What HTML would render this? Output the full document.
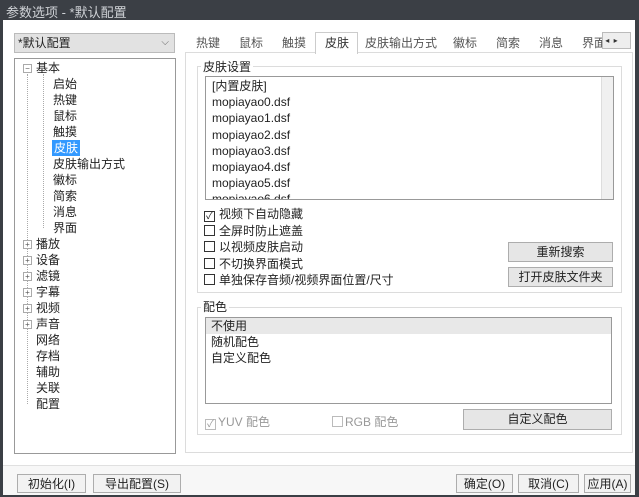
<!DOCTYPE html><html><head><meta charset="utf-8"><style>
*{box-sizing:border-box;margin:0;padding:0}
body{width:639px;height:497px;overflow:hidden;background:#3b3f45;font-family:"Liberation Sans","Noto Sans CJK SC",sans-serif;font-size:12px;color:#222;position:relative}
.a{position:absolute}
.win{left:3px;top:20px;width:632px;height:475px;background:#fff}
.title{left:6px;top:2px;color:#cfd2d6;font-size:13px}
.box{border:1px solid #adadad;background:#fff}
.btn{border:1px solid #adadad;background:#e6e6e6;text-align:center;line-height:18px}
.tab{top:34px;color:#555}
.grp{border:1px solid #dcdcdc}
.cb{width:11px;height:11px;border:1px solid #333;background:#fff;display:inline-block;vertical-align:-1px;margin-right:4px;font-size:10px;line-height:9px;text-align:center}
.tree div{position:absolute;left:38px;line-height:16px}
.tree .pl{left:8px;width:9px;height:9px;border:1px solid #aaa;background:#fff;font-size:8px;line-height:7px;text-align:center;color:#555}
</style></head><body>
<div class="a title">参数选项 - *默认配置</div>
<div class="a win"></div>
<div class="a" style="left:14px;top:33px;width:161px;height:20px;background:#e2e2e2;border:1px solid #bbb;line-height:18px;padding-left:3px">*默认配置<span style="position:absolute;right:5px;color:#666;font-size:10px">⌵</span></div>
<div class="a box tree" style="left:14px;top:58px;width:162px;height:396px;border-color:#999">
<div style="left:12px;top:15px;width:0;height:330px;border-left:1px dotted #aaa"></div>
<div style="left:28px;top:15px;width:0;height:154px;border-left:1px dotted #aaa"></div>
<div class="pl" style="top:5px">−</div>
<div style="left:21px;top:1px">基本</div>
<div style="top:17px">启始</div><div style="top:33px">热键</div><div style="top:49px">鼠标</div><div style="top:65px">触摸</div>
<div style="top:81px;background:#3399ff;color:#fff;padding:0 2px;left:37px">皮肤</div>
<div style="top:97px">皮肤输出方式</div><div style="top:113px">徽标</div><div style="top:129px">简索</div><div style="top:145px">消息</div><div style="top:161px">界面</div>
<div class="pl" style="top:181px">+</div><div class="pl" style="top:197px">+</div><div class="pl" style="top:213px">+</div><div class="pl" style="top:229px">+</div><div class="pl" style="top:245px">+</div><div class="pl" style="top:261px">+</div>
<div style="left:21px;top:177px">播放</div><div style="left:21px;top:193px">设备</div><div style="left:21px;top:209px">滤镜</div><div style="left:21px;top:225px">字幕</div><div style="left:21px;top:241px">视频</div><div style="left:21px;top:257px">声音</div><div style="left:21px;top:273px">网络</div><div style="left:21px;top:289px">存档</div><div style="left:21px;top:305px">辅助</div><div style="left:21px;top:321px">关联</div><div style="left:21px;top:337px">配置</div>
</div>
<div class="a" style="left:185px;top:52px;width:448px;height:401px;border:1px solid #dcdcdc"></div>
<div class="a" style="left:315px;top:32px;width:43px;height:22px;background:#fff;border:1px solid #ccc;border-bottom:none"></div>
<div class="a tab" style="left:196px">热键</div><div class="a tab" style="left:239px">鼠标</div><div class="a tab" style="left:282px">触摸</div><div class="a tab" style="left:325px;color:#333">皮肤</div><div class="a tab" style="left:365px">皮肤输出方式</div><div class="a tab" style="left:453px">徽标</div><div class="a tab" style="left:496px">简索</div><div class="a tab" style="left:539px">消息</div><div class="a tab" style="left:582px">界面</div>
<div class="a" style="left:602px;top:32px;width:29px;height:17px;border:1px solid #bbb;background:#eee;font-size:8px;line-height:15px;color:#333">&nbsp;◂ &nbsp;▸</div>
<div class="a grp" style="left:197px;top:66px;width:425px;height:227px"></div>
<div class="a" style="left:201px;top:58px;background:#fff;padding:0 2px">皮肤设置</div>
<div class="a box" style="left:205px;top:76px;width:409px;height:124px;border-color:#999;overflow:hidden;line-height:16.2px;padding:1px 0 0 6px">[内置皮肤]<br>mopiayao0.dsf<br>mopiayao1.dsf<br>mopiayao2.dsf<br>mopiayao3.dsf<br>mopiayao4.dsf<br>mopiayao5.dsf<br>mopiayao6.dsf
<div class="a" style="right:0;top:0;width:12px;height:122px;background:#f0f0f0;border-left:1px solid #ddd"></div></div>
<div class="a" style="left:204px;top:206px;line-height:16.5px"><span class="cb">✓</span>视频下自动隐藏<br><span class="cb"></span>全屏时防止遮盖<br><span class="cb"></span>以视频皮肤启动<br><span class="cb"></span>不切换界面模式<br><span class="cb"></span>单独保存音频/视频界面位置/尺寸</div>
<div class="a btn" style="left:508px;top:242px;width:105px;height:20px">重新搜索</div>
<div class="a btn" style="left:508px;top:267px;width:105px;height:20px">打开皮肤文件夹</div>
<div class="a grp" style="left:197px;top:307px;width:425px;height:128px"></div>
<div class="a" style="left:201px;top:298px;background:#fff;padding:0 2px">配色</div>
<div class="a box" style="left:205px;top:317px;width:407px;height:87px;border-color:#999;line-height:16px">
<div style="background:#e8e8e8;padding-left:5px">不使用</div><div style="padding-left:5px">随机配色</div><div style="padding-left:5px">自定义配色</div></div>
<div class="a" style="left:205px;top:413px;color:#999"><span class="cb" style="border-color:#bbb;color:#999;margin-right:2px">✓</span>YUV 配色</div>
<div class="a" style="left:332px;top:413px;color:#999"><span class="cb" style="border-color:#bbb;margin-right:2px"></span>RGB 配色</div>
<div class="a btn" style="left:463px;top:409px;width:149px;height:21px">自定义配色</div>
<div class="a" style="left:3px;top:465px;width:632px;height:30px;border-top:1px solid #e0e0e0;background:#f7f7f7"></div>
<div class="a btn" style="left:17px;top:474px;width:69px;height:19px;background:#f2f2f2">初始化(I)</div>
<div class="a btn" style="left:93px;top:474px;width:88px;height:19px;background:#f2f2f2">导出配置(S)</div>
<div class="a btn" style="left:456px;top:474px;width:57px;height:19px;background:#f2f2f2">确定(O)</div>
<div class="a btn" style="left:518px;top:474px;width:61px;height:19px;background:#f2f2f2">取消(C)</div>
<div class="a btn" style="left:584px;top:474px;width:47px;height:19px;background:#f2f2f2">应用(A)</div>
</body></html>
